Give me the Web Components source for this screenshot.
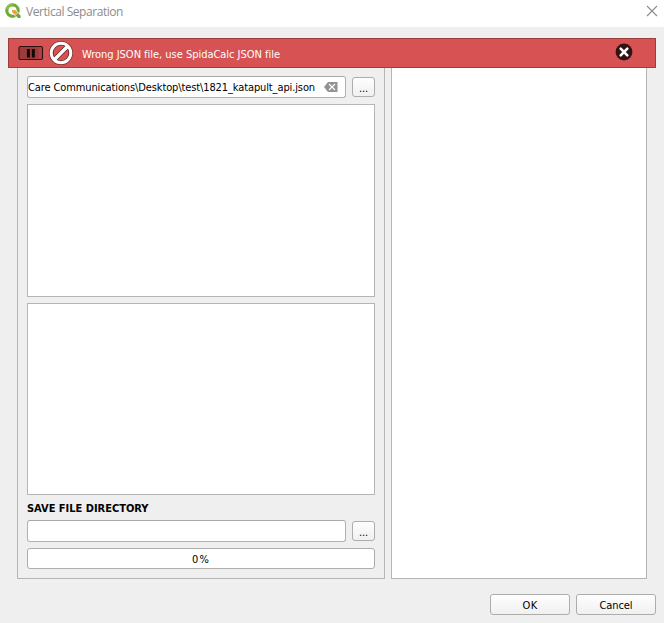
<!DOCTYPE html>
<html lang="en">
<head>
<meta charset="utf-8">
<title>Vertical Separation</title>
<style>
html,body{margin:0;height:100%;overflow:hidden;background:#efefef}
</style>
</head>
<body>
<vs-dialog></vs-dialog>
<script>
const define = (name, html, setup) => customElements.define(name, class extends HTMLElement {
  connectedCallback() {
    if (this.shadowRoot) return;
    const root = this.attachShadow({ mode: 'open' });
    const t = document.createElement('template');
    t.innerHTML = html;
    root.append(t.content.cloneNode(true));
    if (setup) setup(this, root);
  }
});

// Label whose letter spacing is tuned so the text spans the given width.
define('fit-label', `<style>
:host{display:inline-block;white-space:pre;line-height:14px;flex:none}
span{display:inline-block}
</style><span></span>`, (el, root) => {
  const s = root.querySelector('span');
  s.textContent = el.getAttribute('text');
  const w = +el.getAttribute('width');
  const n = s.textContent.length;
  s.style.letterSpacing = (w - s.getBoundingClientRect().width) / n + 'px';
  el.style.width = w + 'px';
});

define('line-edit', `<style>
:host{display:flex;align-items:center;box-sizing:border-box;height:22px;flex:1;background:#fff;border:1px solid #b1b1b1;border-top-color:#a9a9a9;border-radius:3px;padding-left:0;overflow:hidden}
</style><slot></slot>`);

define('list-box', `<style>
:host{display:block;box-sizing:border-box;background:#fff;border:1px solid #b5b5b5}
</style>`);

define('push-button', `<style>
:host{display:flex;align-items:center;justify-content:center;box-sizing:border-box;width:80px;height:21px;border:1px solid #adadad;border-radius:3px;background:linear-gradient(#fefefe,#f0f0f0)}
:host([tool]){width:23px;height:20px;flex:none}
</style><slot></slot>`);

define('progress-bar', `<style>
:host{display:flex;align-items:center;justify-content:center;box-sizing:border-box;height:21px;background:#fff;border:1px solid #adadad;border-radius:3px}
</style><slot></slot>`);

define('title-bar', `<style>
:host{display:flex;box-sizing:border-box;height:27px;background:#fff;padding:3px 6px 0 5px;font:12px "Open Sans","Noto Sans",sans-serif;color:#8c8c8c}
.logo{margin-right:5px;flex:none}
fit-label{margin-top:2px}
.x{margin:2px 0 0 auto}
</style>
<svg class="logo" width="16" height="16" viewBox="0 0 16 16"><circle cx="7.5" cy="7.6" r="5.700" fill="none" stroke="#6fac35" stroke-width="3.200"/><path d="M2 6A5.900 5.900 0 0 1 7.500 1.600" fill="none" stroke="#8fbe55" stroke-width="2"/><path d="M6.500 6.500h4l5.200 5.600v3h-3.200L6.500 9.800z" fill="#fff"/><path d="M7 7h3.300l1.700 1.800v2.800H9.500L7 9z" fill="#f0a040"/><path d="M9.700 11.700h2.500V9.200l3.400 3.300V15h-2.500z" fill="#6aa637"/></svg>
<fit-label text="Vertical Separation" width="97"></fit-label>
<svg class="x" width="12" height="12" viewBox="0 0 12 12"><path d="M1 1l10 10M11 1L1 11" stroke="#8c8c8c" stroke-width="1.1"/></svg>`);

define('message-bar', `<style>
:host{display:flex;align-items:center;box-sizing:border-box;height:30px;margin:11px 8px 0;background:#d65253;border:1px solid #9b3d3d;color:#fff;padding:0 22px 0 9px}
svg{flex:none}
.no{margin-left:5px;margin-right:9px}
fit-label{margin-top:3px}
.close{margin:-3px 0 0 auto}
</style>
<svg width="26" height="16" viewBox="0 0 26 16"><rect x="1" y="1.5" width="23.5" height="13" rx="1.5" fill="#b34142" stroke="#2b1112" stroke-width="1.1"/><path d="M2 2h18.500v12H2z" fill="#9b3b3c"/><path d="M10.400 4v8.500M15.300 4v8.500" stroke="#120607" stroke-width="3"/></svg>
<svg class="no" width="24" height="24" viewBox="0 0 24 24"><circle cx="12" cy="12" r="9.700" fill="none" stroke="#702a2b" stroke-width="4.600"/><path d="M5.500 18.500L18.500 5.500" stroke="#702a2b" stroke-width="5"/><circle cx="12" cy="12" r="9.800" fill="none" stroke="#fff" stroke-width="3"/><path d="M5.500 18.500L18.500 5.500" stroke="#fff" stroke-width="3.300"/></svg>
<fit-label text="Wrong JSON file, use SpidaCalc JSON file" width="198"></fit-label>
<svg class="close" width="18" height="18" viewBox="0 0 18 18"><circle cx="9" cy="9" r="8.400" fill="#341314"/><path d="M5.700 5.700l6.600 6.600M12.300 5.700l-6.600 6.600" stroke="#fff" stroke-width="2.600" stroke-linecap="round"/></svg>`);

define('vs-dialog', `<style>
:host{display:flex;flex-direction:column;width:664px;height:623px;background:#efefef;font:11px "DejaVu Sans Condensed","DejaVu Sans",sans-serif;font-stretch:condensed;color:#000}
.panels{display:flex;gap:6px;height:511px;padding:0 17px}
.left{box-sizing:border-box;width:368px;border:1px solid #b5b5b5;border-top:0;padding:8px 9px 9px;display:flex;flex-direction:column}
.row{display:flex;gap:6px;align-items:center}
.a{height:193px;margin:6px 0}
.b{height:192px}
.h{font-weight:bold;margin:7px 0 4px}
.right{flex:1;border-top:0}
.clear{margin-left:9px;flex:none}
.actions{display:flex;justify-content:flex-end;gap:6px;padding:15px 8px 0}
push-button fit-label,progress-bar fit-label{margin-top:2px}
push-button[tool] fit-label{margin-top:4px}
line-edit fit-label{margin:2px 0 0}
</style>
<title-bar></title-bar>
<message-bar></message-bar>
<div class="panels">
  <div class="left">
    <div class="row"><line-edit><fit-label text="Care Communications\\Desktop\\test\\1821_katapult_api.json" width="287"></fit-label><svg class="clear" width="14" height="10" viewBox="0 0 14 10"><path d="M4 0h9.500v10H4L0 5z" fill="#929292"/><path d="M5 2l6 6M11 2L5 8" stroke="#fff" stroke-width="1.200"/></svg></line-edit><push-button tool><fit-label text="..." width="9"></fit-label></push-button></div>
    <list-box class="a"></list-box>
    <list-box class="b"></list-box>
    <fit-label class="h" text="SAVE FILE DIRECTORY" width="121.500"></fit-label>
    <div class="row" style="margin-bottom:6px"><line-edit></line-edit><push-button tool><fit-label text="..." width="9"></fit-label></push-button></div>
    <progress-bar><fit-label text="0%" width="18"></fit-label></progress-bar>
  </div>
  <list-box class="right"></list-box>
</div>
<div class="actions"><push-button><fit-label text="OK" width="15"></fit-label></push-button><push-button><fit-label text="Cancel" width="33"></fit-label></push-button></div>`);
</script>
</body>
</html>
